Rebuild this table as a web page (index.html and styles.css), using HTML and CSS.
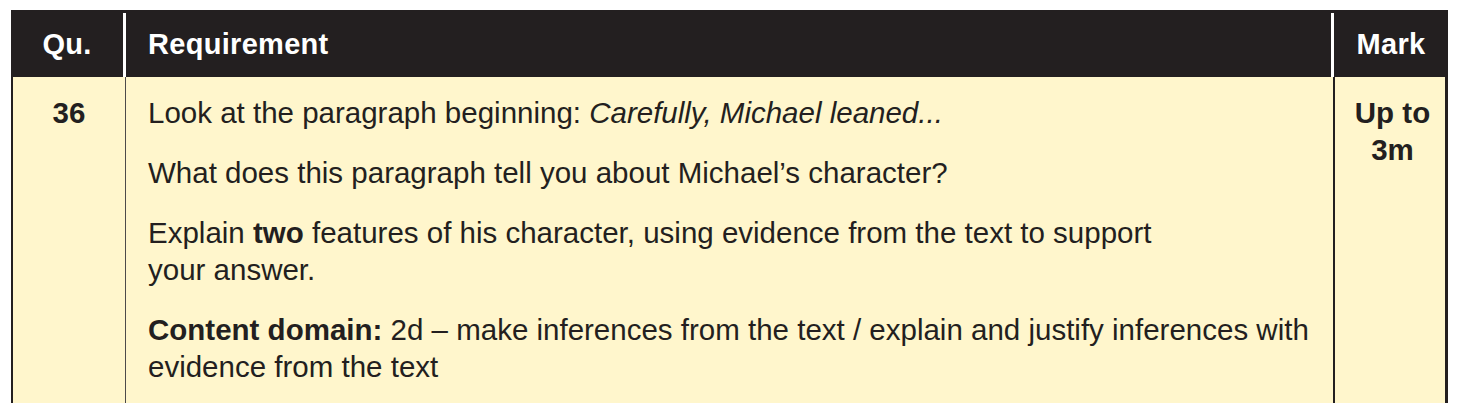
FILE: index.html
```html
<!DOCTYPE html>
<html lang="en">
<head>
<meta charset="utf-8">
<title>Mark scheme</title>
<link rel="stylesheet" href="styles.css">
</head>
<body>
<div class="table">
  <div class="head">
    <div class="hcell qu">Qu.</div>
    <div class="hcell req">Requirement</div>
    <div class="hcell mark">Mark</div>
  </div>
  <div class="row">
    <div class="cell qu"><b>36</b></div>
    <div class="cell req">
      <p>Look at the paragraph beginning: <i>Carefully, Michael leaned...</i></p>
      <p>What does this paragraph tell you about Michael’s character?</p>
      <p>Explain <b>two</b> features of his character, using evidence from the text to support<br>your answer.</p>
      <p><b>Content domain:</b> 2d – make inferences from the text / explain and justify inferences with<br>evidence from the text</p>
    </div>
    <div class="cell mark"><b>Up to<br>3m</b></div>
  </div>
</div>
</body>
</html>
```
FILE: styles.css
```css
html, body {
  margin: 0;
  padding: 0;
  background: #ffffff;
  overflow: hidden;
}
body {
  padding: 10px 10px 0 11px;
  font-family: "Liberation Sans", Arial, sans-serif;
  color: #231f20;
}
.table {
  width: 1437px;
}
.head {
  display: grid;
  grid-template-columns: 112px 1208px 117px;
  background: #231f20;
  height: 67px;
  padding-top: 3px;
  box-sizing: border-box;
}
.hcell {
  color: #ffffff;
  font-weight: bold;
  font-size: 29px;
  letter-spacing: 0.3px;
  display: flex;
  align-items: center;
  padding-bottom: 1px;
}
.hcell.qu { justify-content: center; }
.hcell.req {
  border-left: 3px solid #ffffff;
  padding-left: 22px;
}
.hcell.mark {
  border-left: 3px solid #ffffff;
  justify-content: center;
}
.row {
  display: grid;
  grid-template-columns: 112px 1208px 117px;
  background: #fff6cc;
  border-left: 2px solid #231f20;
  border-right: 3px solid #231f20;
  box-sizing: border-box;
  width: 1437px;
}
.cell {
  font-size: 29.5px;
  line-height: 37px;
  padding-top: 17px;
  padding-bottom: 40px;
}
.cell.qu {
  text-align: center;
}
.cell.req {
  border-left: 1px solid #4d4a4a;
  padding-left: 22px;
}
.cell.req p {
  margin: 0 0 23px 0;
}
.cell.mark {
  border-left: 2px solid #231f20;
  text-align: center;
}
```
